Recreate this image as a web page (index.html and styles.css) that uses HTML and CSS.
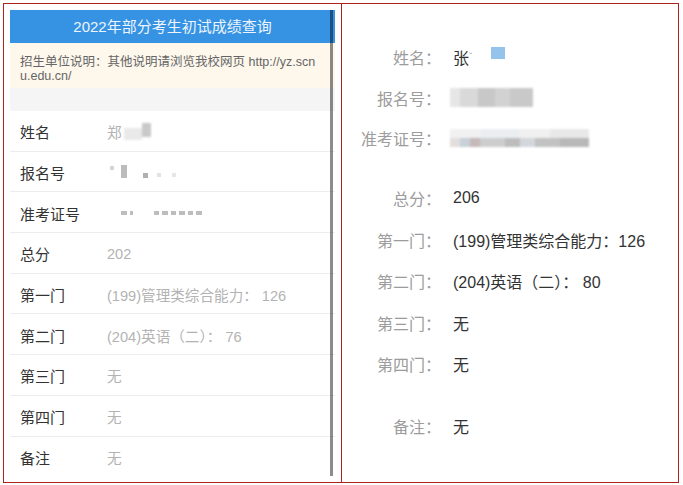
FILE: index.html
```html
<!DOCTYPE html>
<html lang="zh-CN">
<head>
<meta charset="utf-8">
<title>成绩查询</title>
<link rel="stylesheet" href="styles.css">
</head>
<body>
<div class="frame">
  <div class="cell cell-left">
    <div class="phone">
      <div class="phone-head">2022年部分考生初试成绩查询</div>
      <div class="notice">招生单位说明：其他说明请浏览我校网页 http://yz.scn<br>u.edu.cn/</div>
      <div class="spacer"></div>
      <div class="list">
        <div class="row"><span class="lab">姓名</span><span class="val">郑<span class="blur-name"><i class="bn1"></i><i class="bn2"></i></span></span></div>
        <div class="row"><span class="lab">报名号</span><span class="val dots-a"><i class="d1"></i><i class="d2"></i><i class="d3"></i><i class="d4"></i><i class="d5"></i></span></div>
        <div class="row"><span class="lab">准考证号</span><span class="val dots-b"><i></i><i class="sm"></i><i class="gap"></i><i></i><i></i><i></i><i></i><i></i><i></i></span></div>
        <div class="row"><span class="lab">总分</span><span class="val">202</span></div>
        <div class="row"><span class="lab">第一门</span><span class="val">(199)管理类综合能力： 126</span></div>
        <div class="row"><span class="lab">第二门</span><span class="val">(204)英语（二）： 76</span></div>
        <div class="row"><span class="lab">第三门</span><span class="val">无</span></div>
        <div class="row"><span class="lab">第四门</span><span class="val">无</span></div>
        <div class="row"><span class="lab">备注</span><span class="val">无</span></div>
      </div>
      <div class="scrollbar"></div>
    </div>
  </div>
  <div class="cell cell-right">
    <div class="group g1">
      <div class="r-row"><span class="r-lab">姓名：</span><span class="r-val">张<span class="tick">ˇ</span><span class="blue-sq"></span></span></div>
      <div class="r-row"><span class="r-lab">报名号：</span><span class="r-val"><span class="mosaic m1"></span></span></div>
      <div class="r-row"><span class="r-lab">准考证号：</span><span class="r-val"><span class="mosaic m2"></span></span></div>
    </div>
    <div class="group g2">
      <div class="r-row"><span class="r-lab">总分：</span><span class="r-val">206</span></div>
      <div class="r-row"><span class="r-lab">第一门：</span><span class="r-val">(199)管理类综合能力：126</span></div>
      <div class="r-row"><span class="r-lab">第二门：</span><span class="r-val">(204)英语（二）： 80</span></div>
      <div class="r-row"><span class="r-lab">第三门：</span><span class="r-val">无</span></div>
      <div class="r-row"><span class="r-lab">第四门：</span><span class="r-val">无</span></div>
    </div>
    <div class="group g3">
      <div class="r-row"><span class="r-lab">备注：</span><span class="r-val">无</span></div>
    </div>
  </div>
</div>
</body>
</html>
```

FILE: styles.css
```css
* { box-sizing: border-box; }
html, body { margin: 0; padding: 0; background: #fff; }
body {
  font-family: "Liberation Sans", "Noto Sans CJK SC", sans-serif;
  color: #333;
}
.frame {
  margin: 3px 0 0 3px;
  width: 676px;
  height: 480px;
  border: 1px solid #ad231b;
  display: flex;
}
.cell-left {
  width: 338px;
  padding: 6px 7px 5px 6px;
  border-right: 1px solid #ad231b;
}
.cell-right {
  flex: 1;
  padding: 33px 0 0 19px;
}
.phone {
  position: relative;
  width: 325px;
  height: 466px;
  overflow: hidden;
  background: #fff;
}
.phone-head {
  height: 33px;
  background: #3693e4;
  color: #eef5fc;
  font-size: 15px;
  line-height: 33px;
  text-align: center;
}
.notice {
  height: 45px;
  background: #fdf7ec;
  color: #666;
  font-size: 12.5px;
  line-height: 14px;
  padding: 12px 10px 0 10px;
  white-space: nowrap;
}
.spacer {
  height: 23px;
  background: #f5f5f5;
}
.row {
  display: grid;
  grid-template-columns: 87px 1fr;
  align-items: center;
  height: 40.7px;
  padding: 2px 0 0 10px;
  border-bottom: 1px solid #ededed;
  font-size: 14.5px;
}
.lab { color: #333; font-size: 15px; }
.val { color: #b3b3b3; font-size: 14.6px; display: flex; align-items: center; white-space: pre; }
.blur-name { display: inline-flex; margin-left: 2px; filter: blur(1px); }
.blur-name .bn1 { width: 18px; height: 12px; background: #e9e9e9; margin-top: 5px; }
.blur-name .bn2 { width: 9px; height: 14px; background: #c9c9c9; }
.dots-a { position: relative; height: 16px; }
.dots-a i { position: absolute; background: #c4c4c4; filter: blur(0.5px); }
.dots-a .d1 { left: 3px; top: 1px; width: 4px; height: 4px; background: #d6d6d6; }
.dots-a .d2 { left: 14px; top: 0; width: 6px; height: 13px; background: #bcbcbc; }
.dots-a .d3 { left: 36px; top: 8px; width: 5px; height: 5px; background: #b0b0b0; }
.dots-a .d4 { left: 50px; top: 8px; width: 4px; height: 4px; background: #e2e2e2; }
.dots-a .d5 { left: 65px; top: 8px; width: 4px; height: 4px; background: #e6e6e6; }
.dots-b { gap: 3px; padding-left: 14px; }
.dots-b i { display: block; width: 5.5px; height: 4px; background: #bdbdbd; filter: blur(0.4px); }
.dots-b i.sm { width: 3px; }
.dots-b i.gap { width: 15px; background: transparent; }
.scrollbar {
  position: absolute;
  top: 0;
  left: 320px;
  width: 3px;
  height: 466px;
  background: rgba(0, 0, 0, 0.45);
}
.group.g2 { margin-top: 19px; }
.group.g3 { margin-top: 19.5px; }
.g1 .r-row { height: 40.5px; }
.g2 .r-row { height: 41.5px; }
.r-row {
  display: grid;
  grid-template-columns: 80px 1fr;
  column-gap: 12px;
  align-items: center;
  height: 42px;
  font-size: 16px;
}
.r-lab { color: #9c9c9c; text-align: right; }
.r-val { color: #333; display: flex; align-items: center; white-space: pre; }
.tick { color: #aaa; font-size: 10px; margin-left: 0; width: 8px; }
.blue-sq {
  display: inline-block;
  width: 14px;
  height: 12px;
  background: #94c3ec;
  margin-left: 14px;
  margin-top: -8px;
}
.mosaic { display: block; filter: blur(1.2px); margin-left: -3px; }
.m1 {
  width: 83px;
  height: 19px;
  background:
    linear-gradient(90deg, #e6e6e6 0 10px, #d9d9d9 10px 28px, #c8c8c8 28px 45px, #d2d2d2 45px 60px, #c9c9c9 60px 83px);
}
.m2 {
  width: 139px;
  height: 18px;
  background:
    linear-gradient(90deg, #f1f1f1 0 30px, #ebeef1 30px 70px, #f0f0f0 70px 100px, #e8e8e8 100px 139px) top / 100% 9px no-repeat,
    linear-gradient(90deg, #e3dede 0 10px, #c8d0d8 10px 20px, #c6b9b9 20px 30px, #cdcdcd 30px 55px, #bdbdbd 55px 70px, #d3d7dc 70px 85px, #c2c2c2 85px 110px, #b8b8b8 110px 139px) bottom / 100% 9px no-repeat;
}
```
